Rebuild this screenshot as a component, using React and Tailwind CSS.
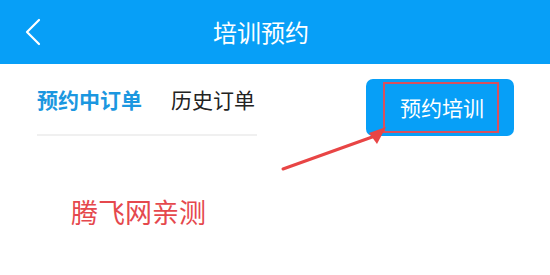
import React from 'react'

const font = { fontFamily: '"Noto Sans CJK SC", "Noto Sans", sans-serif' }

export default function App() {
  return (
    <div className="relative h-[275px] w-[550px] overflow-hidden bg-white" style={font}>
      {/* Header */}
      <div className="relative flex h-[64px] items-center justify-center bg-[#079ff7] pr-[28px]">
        <svg className="absolute left-[24px] top-[18px]" width="18" height="28" viewBox="0 0 18 28">
          <path d="M15 2 L3 14 L15 26" fill="none" stroke="white" strokeWidth="2.2" strokeLinecap="round" strokeLinejoin="round" />
        </svg>
        <span className="text-[24px] leading-none text-white">培训预约</span>
      </div>

      {/* Tabs + button */}
      <div className="flex items-start justify-between pl-[37px] pr-[36px] pt-[15px]">
        <div className="w-[220px]">
          <div className="flex items-center gap-[29px] pt-[10px]">
            <span className="text-[21px] font-bold leading-none text-[#1b97e0]">预约中订单</span>
            <span className="text-[21px] leading-none text-[#222]">历史订单</span>
          </div>
          <div className="mt-[24px] h-[2px] w-[220px] bg-[#f0f0f0]" />
        </div>
        <div className="relative flex h-[57px] w-[148px] items-center justify-center rounded-[7px] bg-[#079ff7]">
          <span className="pl-[4px] text-[21px] leading-none text-white">预约培训</span>
          <div className="absolute left-[17px] top-[3px] h-[51px] w-[116px] border-2 border-[#d9505e]" />
        </div>
      </div>

      {/* Annotation arrow */}
      <svg className="absolute left-0 top-0" width="550" height="275" viewBox="0 0 550 275">
        <line x1="283" y1="169" x2="375" y2="136" stroke="#e84545" strokeWidth="3" strokeLinecap="round" />
        <polygon points="386,127 369,133 377,144" fill="#e84545" />
      </svg>

      <div className="pl-[71px] pt-[62px] text-[27px] leading-none text-[#e5484d]">腾飞网亲测</div>
    </div>
  )
}
